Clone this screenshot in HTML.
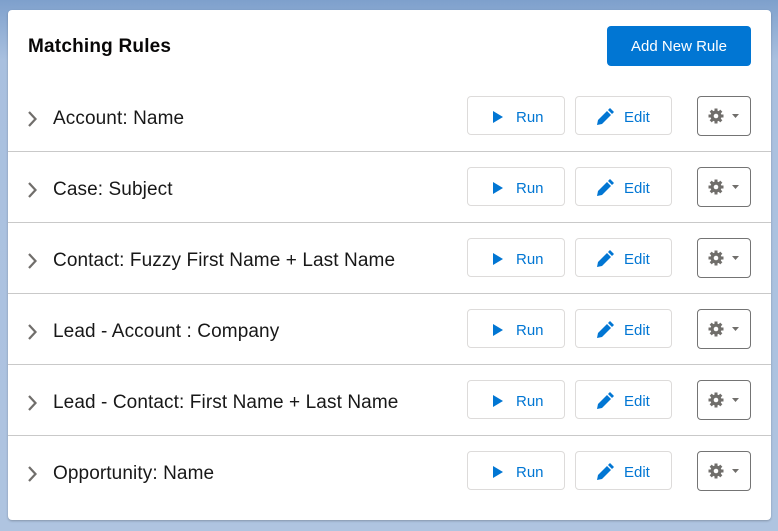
<!DOCTYPE html>
<html><head><style>
body{margin:0;width:778px;height:531px;background:linear-gradient(#7ea0cc,#a9c0df 60px,#afc4e0);font-family:"Liberation Sans",sans-serif;overflow:hidden;position:relative}
.card{position:absolute;left:8px;top:10px;width:763px;height:510px;background:#fff;border-radius:4px;box-shadow:0 1px 2px rgba(0,0,0,.25)}
h1{position:absolute;left:20px;top:26px;margin:0;font-size:19px;font-weight:bold;color:#080707;letter-spacing:0.2px}
.add{position:absolute;left:599px;top:16px;width:144px;height:40px;background:#0176d3;color:#fff;border-radius:4px;font-size:15px;line-height:42px;text-align:center}
.row{position:absolute;left:0;width:763px;height:70px;border-top:1px solid #c9c9c9}
.chev{position:absolute;left:17px;top:29px}
.lbl{position:absolute;left:45px;top:28px;font-size:19px;color:#181818;letter-spacing:0.1px}
.btn{position:absolute;top:16px;height:37px;border:1px solid #dddbda;border-radius:4px;color:#0176d3;font-size:15px;line-height:42px}
.run{left:459px;width:96px}
.edit{left:567px;width:95px}
.gear{position:absolute;left:689px;top:16px;width:52px;height:38px;border:1px solid #747474;border-radius:4px}
</style></head><body>
<div class="card">
<h1>Matching Rules</h1>
<div class="add">Add New Rule</div>
</div>
<div class="card" style="background:transparent;box-shadow:none">
<div class="row" style="top:70px;border-top:none"><svg class="chev" width="14" height="20"><path d="M4 3l6.5 7-6.5 7" stroke="#706e6b" stroke-width="2.2" fill="none"/></svg><div class="lbl">Account: Name</div><div class="btn run"><svg style="position:absolute;left:25px;top:14px" width="10" height="12"><path d="M0 0L10 6 0 12z" fill="#0176d3"/></svg><span style="position:absolute;left:48px">Run</span></div><div class="btn edit"><svg style="position:absolute;left:20px;top:11px" width="18" height="18" viewBox="0 0 18 18"><path d="M1 17l1-5 9-9 4 4-9 9zM12 2l2-2 4 4-2 2z" fill="#0176d3"/></svg><span style="position:absolute;left:48px">Edit</span></div><div class="gear"><svg style="position:absolute;left:10px;top:11px" width="34" height="16"><g fill="#706e6b"><circle cx="8" cy="8" r="5.5"/><rect x="6.5" y="0.5" width="3" height="15"/><rect x="0.5" y="6.5" width="15" height="3"/><rect x="6.5" y="0.5" width="3" height="15" transform="rotate(45 8 8)"/><rect x="6.5" y="0.5" width="3" height="15" transform="rotate(-45 8 8)"/></g><circle cx="8" cy="8" r="2.3" fill="#fff"/><path d="M24 6h7l-3.5 4z" fill="#706e6b"/></svg></div></div>
</div>
<script>
var names=["Account: Name","Case: Subject","Contact: Fuzzy First Name + Last Name","Lead - Account : Company","Lead - Contact: First Name + Last Name","Opportunity: Name"];
var c=document.querySelectorAll('.card')[1];var tpl=c.querySelector('.row');
for(var i=1;i<6;i++){var r=tpl.cloneNode(true);r.style.top=(70+71*i)+'px';r.style.borderTop='1px solid #c9c9c9';r.querySelector('.lbl').textContent=names[i];
r.querySelectorAll('.btn,.gear,.lbl,.chev').forEach(function(e){e.style.marginTop='-1px'});c.appendChild(r);}
</script>
</body></html>
